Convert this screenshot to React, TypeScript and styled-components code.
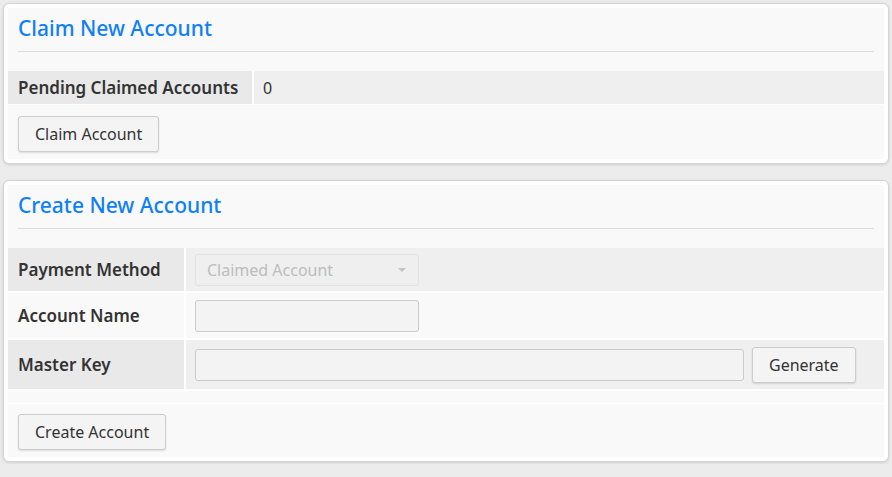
import React from 'react';
import styled, { createGlobalStyle } from 'styled-components';

const GlobalStyle = createGlobalStyle`
  html, body {
    margin: 0;
    padding: 0;
    background-color: #ececec;
    font-family: 'Noto Sans', 'Open Sans', sans-serif;
    color: #333;
  }
`;

export default function App() {
  return (
    <>
      <GlobalStyle />
      <Page>
        <Card>
          <Body>
            <Title>Claim New Account</Title>
            <Rule />
            <Table>
              <Row tone="gray" height={33}>
                <Label width={244}>Pending Claimed Accounts</Label>
                <Value>
                  <Plain>0</Plain>
                </Value>
              </Row>
            </Table>
            <Footer top={11}>
              <Button>Claim Account</Button>
            </Footer>
          </Body>
        </Card>

        <Card>
          <Body>
            <Title>Create New Account</Title>
            <Rule />
            <Table>
              <Row tone="gray" height={43}>
                <Label width={176}>Payment Method</Label>
                <Value>
                  <Select>
                    <span>Claimed Account</span>
                    <Caret />
                  </Select>
                </Value>
              </Row>
              <Row tone="light" height={45}>
                <Label width={176}>Account Name</Label>
                <Value>
                  <Input width={224} />
                </Value>
              </Row>
              <Row tone="gray" height={49}>
                <Label width={176}>Master Key</Label>
                <Value>
                  <Input width={549} />
                  <Button>Generate</Button>
                </Value>
              </Row>
              <Row tone="light" height={12}>
                <Spacer />
              </Row>
            </Table>
            <Footer top={10}>
              <Button>Create Account</Button>
            </Footer>
          </Body>
        </Card>
      </Page>
    </>
  );
}

const Page = styled.div`
  padding: 3px 3px 2px;
  display: flex;
  flex-direction: column;
  gap: 16px;
`;

const Card = styled.section`
  padding: 4px;
  background-color: #fff;
  border: 1px solid #d4d4d4;
  border-radius: 6px;
  box-shadow: 0 1px 3px rgba(0, 0, 0, 0.12);
`;

const Body = styled.div`
  padding: 0 0 7px;
  background-color: #f9f9f9;
`;

const Title = styled.h2`
  margin: 0;
  padding: 4px 10px 0;
  height: 32px;
  font-size: 21px;
  font-weight: 500;
  line-height: 32px;
  color: #0f80f7;
`;

const Rule = styled.hr`
  margin: 7px 10px 19px;
  border: 0;
  border-top: 1px solid #dcdcdc;
`;

const Table = styled.div`
  display: flex;
  flex-direction: column;
  gap: 2px;
  background-color: #fff;
  padding-bottom: 1px;
`;

const Row = styled.div<{ tone: 'gray' | 'light'; height: number }>`
  display: flex;
  gap: 2px;
  height: ${p => p.height}px;
  background-color: #fff;

  & > * {
    background-color: ${p => (p.tone === 'gray' ? '#efefef' : '#f9f9f9')};
  }

  & > *:first-child {
    background-color: ${p => (p.tone === 'gray' ? '#e9e9e9' : '#f9f9f9')};
  }
`;

const Label = styled.div<{ width: number }>`
  flex: 0 0 ${p => p.width}px;
  padding: 0 10px;
  display: flex;
  align-items: center;
  font-size: 17px;
  font-weight: 600;
  color: #333;
  box-sizing: border-box;
`;

const Value = styled.div`
  flex: 1;
  padding: 0 28px 0 9px;
  display: flex;
  align-items: center;
  gap: 8px;
`;

const Spacer = styled.div`
  flex: 1;
`;

const Plain = styled.span`
  font-size: 16px;
  color: #333;
`;

const Select = styled.div`
  width: 224px;
  height: 32px;
  padding: 0 12px 0 11px;
  box-sizing: border-box;
  display: flex;
  align-items: center;
  justify-content: space-between;
  font-size: 16px;
  color: #bcbcbc;
  background-color: #efefef;
  border: 1px solid #e2e2e2;
  border-radius: 3px;
`;

const Caret = styled.span`
  width: 0;
  height: 0;
  border-left: 4px solid transparent;
  border-right: 4px solid transparent;
  border-top: 4px solid #c4c4c4;
`;

const Input = styled.input<{ width: number }>`
  width: ${p => p.width}px;
  height: 32px;
  box-sizing: border-box;
  padding: 0 10px;
  font-family: inherit;
  font-size: 16px;
  background-color: #f3f3f3;
  border: 1px solid #cbcbcb;
  border-radius: 3px;
  outline: none;
`;

const Footer = styled.div<{ top: number }>`
  padding: ${p => p.top}px 10px 0;
`;

const Button = styled.button`
  height: 36px;
  padding: 0 16px;
  font-family: inherit;
  font-size: 16px;
  color: #333;
  background-color: #f4f4f4;
  border: 1px solid #cccccc;
  border-radius: 3px;
  box-shadow: 0 1px 2px rgba(0, 0, 0, 0.12);
  cursor: pointer;
`;
